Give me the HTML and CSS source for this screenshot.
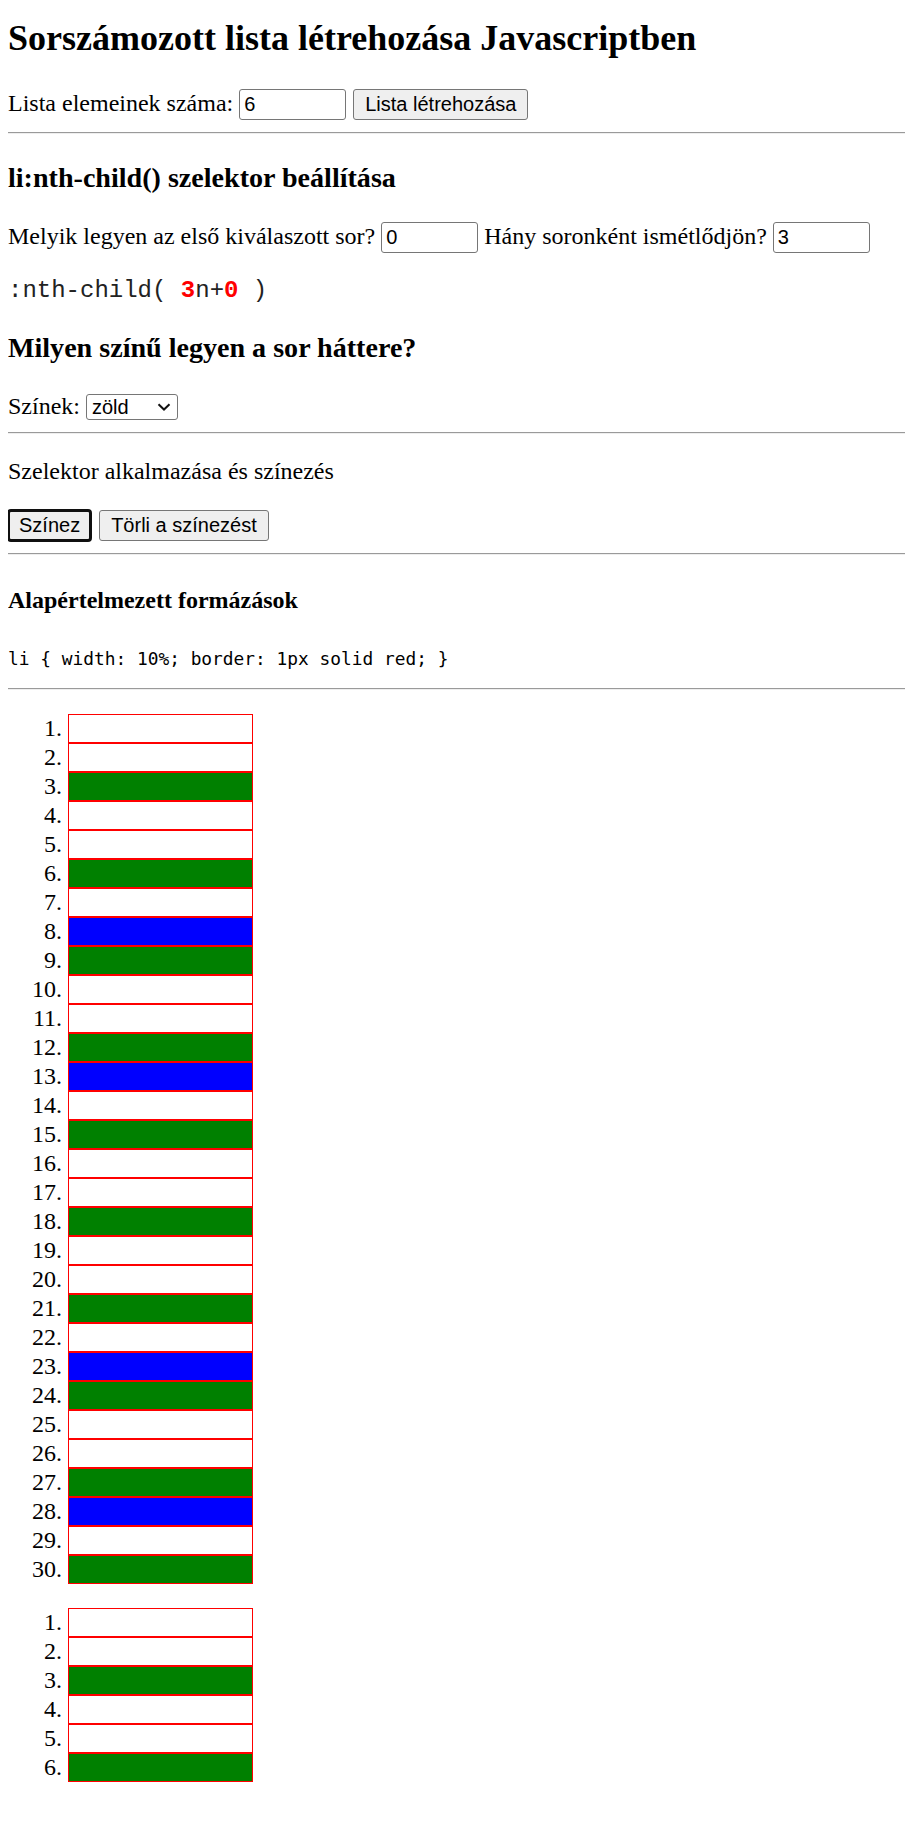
FILE: index.html
```html
<!DOCTYPE html>
<html lang="hu">
<head>
<meta charset="utf-8">
<title>Sorszámozott lista</title>
<link rel="stylesheet" href="styles.css">
</head>
<body>
<h1>Sorszámozott lista létrehozása Javascriptben</h1>
<div class="line">Lista elemeinek száma: <input class="field wide" type="text" value="6"> <button class="btn create">Lista létrehozása</button></div>
<hr>
<h3>li:nth-child() szelektor beállítása</h3>
<p class="line">Melyik legyen az első kiválaszott sor? <input class="field" type="text" value="0"> Hány soronként ismétlődjön? <input class="field" type="text" value="3"></p>
<p class="code">:nth-child( <span class="num">3</span>n+<span class="num">0</span> )</p>
<h3>Milyen színű legyen a sor háttere?</h3>
<div class="line colors">Színek: <span class="select"><span class="select-text">zöld</span><svg class="chev" width="14" height="8" viewBox="0 0 14 8"><polyline points="1.5,1.2 7,6.5 12.5,1.2" fill="none" stroke="#111" stroke-width="2"/></svg></span></div>
<hr>
<p>Szelektor alkalmazása és színezés</p>
<div class="line actions"><button class="btn focused">Színez</button> <button class="btn clear">Törli a színezést</button></div>
<hr>
<h4>Alapértelmezett formázások</h4>
<pre>li { width: 10%; border: 1px solid red; }</pre>
<hr>
<ol>
<li></li><li></li><li class="g"></li><li></li><li></li><li class="g"></li>
<li></li><li class="b"></li><li class="g"></li><li></li><li></li><li class="g"></li>
<li class="b"></li><li></li><li class="g"></li><li></li><li></li><li class="g"></li>
<li></li><li></li><li class="g"></li><li></li><li class="b"></li><li class="g"></li>
<li></li><li></li><li class="g"></li><li class="b"></li><li></li><li class="g"></li>
</ol>
<ol>
<li></li><li></li><li class="g"></li><li></li><li></li><li class="g"></li>
</ol>
</body>
</html>
```

FILE: styles.css
```css
html { background: #fff; }
body {
  margin: 8px;
  font-family: "Liberation Serif", "Times New Roman", serif;
  font-size: 24px;
  color: #000;
}
h1 {
  font-size: 36px;
  font-weight: bold;
  margin: 9px 0 30px;
}
h3 {
  font-size: 28.08px;
  margin: 28px 0;
}
h4 {
  font-size: 24px;
  margin: 32px 0 33px;
}
p { margin: 24px 0; }
hr {
  margin: 12px 0 13px;
  border: 0;
  border-top: 1px solid #9a9a9a;
  border-bottom: 1px solid #eeeeee;
  height: 0;
}
.colors { padding-top: 1px; }
.actions { padding-top: 1px; }
.field {
  box-sizing: border-box;
  width: 97px;
  height: 31px;
  padding: 0 4px;
  border: 1px solid #767676;
  border-radius: 3px;
  font-family: "Liberation Sans", Arial, sans-serif;
  font-size: 20px;
  color: #000;
  background: #fff;
  margin: 0;
}
.field.wide { width: 107px; }
.btn {
  box-sizing: border-box;
  height: 31px;
  padding: 0 11px;
  border: 1px solid #767676;
  border-radius: 3px;
  background: #efefef;
  font-family: "Liberation Sans", Arial, sans-serif;
  font-size: 20px;
  color: #000;
  margin: 0;
}
.btn.create { margin-left: 1px; }
.btn.focused {
  padding: 0 10px;
  outline: 3px solid #101010;
  outline-offset: -2px;
}
.btn.clear { margin-left: 2px; }
.code {
  font-family: "Liberation Mono", "Courier New", monospace;
  font-size: 24px;
  color: #222;
}
.num {
  color: #ff0000;
  font-weight: bold;
}
.select {
  display: inline-flex;
  align-items: center;
  justify-content: space-between;
  box-sizing: border-box;
  width: 92px;
  height: 26px;
  padding: 0 5px;
  border: 1px solid #767676;
  border-radius: 3px;
  font-family: "Liberation Sans", Arial, sans-serif;
  font-size: 20px;
  vertical-align: baseline;
}
.select-text { line-height: 24px; }
.chev { display: block; margin-right: 1px; }
pre {
  font-family: "DejaVu Sans Mono", Consolas, monospace;
  font-size: 17.85px;
  line-height: 23px;
  margin: 20px 0 18px;
}
ol {
  margin: 24px 0;
  padding-left: 60px;
}
li {
  box-sizing: border-box;
  width: 185px;
  height: 29px;
  line-height: 27px;
  border: 1px solid red;
}
li.g { background: #008000; }
li.b { background: #0000ff; }
```
